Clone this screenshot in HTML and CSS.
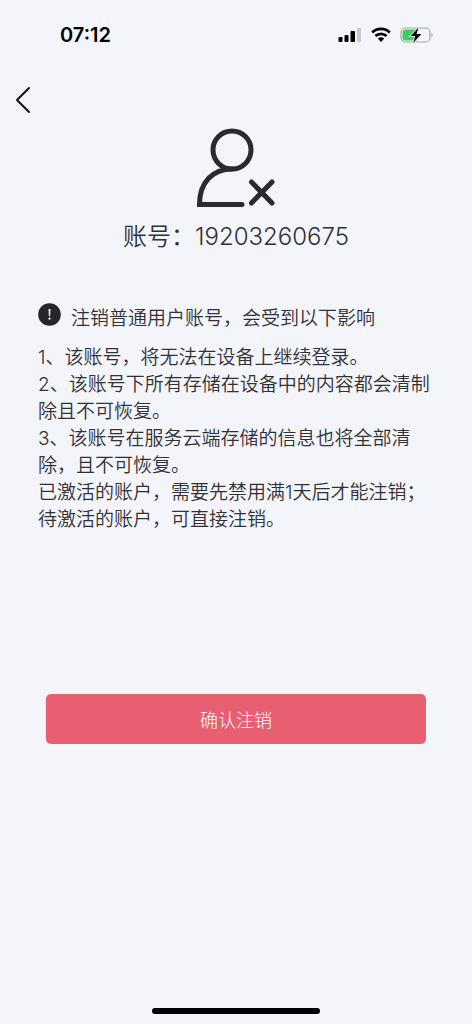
FILE: index.html
```html
<!DOCTYPE html>
<html lang="zh-CN">
<head>
<meta charset="utf-8">
<meta name="viewport" content="width=device-width, initial-scale=1">
<title>注销账号</title>
<link rel="stylesheet" href="styles.css">
</head>
<body>
<div class="screen">
  <header class="status">
    <time class="clock">07:12</time>
    <div class="indicators">
      <svg width="24" height="16" viewBox="0 0 24 16" aria-hidden="true">
        <rect x="0.5" y="10" width="4" height="5" rx="1"/>
        <rect x="6.5" y="8" width="4" height="7" rx="1"/>
        <rect x="12.5" y="4" width="4.5" height="11" rx="1"/>
        <rect x="19" y="1" width="4" height="14" rx="1" fill="#c9cace"/>
      </svg>
      <svg width="20" height="16" viewBox="0 0 20 16" aria-hidden="true">
        <path d="M1.2 5.4a12.8 12.8 0 0 1 17.6 0M4.4 9a8.2 8.2 0 0 1 11.2 0" fill="none" stroke="#000" stroke-width="2.7"/>
        <path d="M6.8 11.6a4.8 4.8 0 0 1 6.4 0L10 15z"/>
      </svg>
      <svg width="34" height="18" viewBox="0 0 34 18" aria-hidden="true">
        <rect x="1" y="2" width="29" height="14" rx="4.5" fill="none" stroke="#a3a5a9" stroke-width="1.2"/>
        <path d="M5.5 3.5H17v11H5.5a3 3 0 0 1-3-3v-5a3 3 0 0 1 3-3z" fill="#3dcb62"/>
        <path d="M31.5 6.5q2.2 2.5 0 5z" fill="#a3a5a9"/>
        <path d="M18.5 1.5 10.5 10h4.7l-2 7 8.2-9h-4.9z" stroke="#f4f5fa" stroke-width="1.6" paint-order="stroke"/>
      </svg>
    </div>
  </header>
  <nav class="nav">
    <button class="back" type="button" aria-label="返回">
      <svg width="16" height="28" viewBox="0 0 16 28" aria-hidden="true"><path d="M14 2 2 14l12 12" fill="none" stroke="#111217" stroke-width="2" stroke-linecap="round" stroke-linejoin="round"/></svg>
    </button>
  </nav>
  <main class="content">
    <section class="account">
      <svg width="80" height="80" viewBox="0 0 80 80" aria-hidden="true" fill="none" stroke="#2a2b2f" stroke-width="5">
        <circle cx="36" cy="22" r="19"/>
        <path d="M36 41C17 41 3.5 54 3.5 76.5H46" stroke-linecap="round" stroke-linejoin="miter"/>
        <path d="M55.5 54 76 75M76 54 55.5 75" stroke-linecap="round"/>
      </svg>
      <p class="number">账号：19203260675</p>
    </section>
    <section class="notice">
      <h1 class="title">
        <svg width="23" height="23" viewBox="0 0 23 23" aria-hidden="true"><circle cx="11.5" cy="11.5" r="11.3" fill="#25262b"/><path d="M10.5 6h2l-.4 7.3h-1.2z" fill="#f4f5fa"/><circle cx="11.5" cy="15.7" r="1.1" fill="#f4f5fa"/></svg>
        <span class="heading">注销普通用户账号，会受到以下影响</span>
      </h1>
      <p>1、该账号，将无法在设备上继续登录。</p>
      <p>2、该账号下所有存储在设备中的内容都会清制除且不可恢复。</p>
      <p>3、该账号在服务云端存储的信息也将全部清除，且不可恢复。</p>
      <p>已激活的账户，需要先禁用满1天后才能注销；</p>
      <p>待激活的账户，可直接注销。</p>
    </section>
    <button class="confirm" type="button">确认注销</button>
  </main>
  <footer class="home"><div class="bar"></div></footer>
</div>
</body>
</html>
```
FILE: styles.css
```css
* {
  box-sizing: border-box;
}

body {
  margin: 0;
  background: #f4f5fa;
  color: #303136;
  font-family: Inter, "Noto Sans CJK SC", sans-serif;
  font-weight: 350;
}

p,
h1 {
  margin: 0;
}

svg {
  display: block;
  flex: none;
}

.screen {
  display: flex;
  flex-direction: column;
  min-height: 100vh;
}

.status {
  display: flex;
  align-items: center;
  justify-content: space-between;
  padding: 23px 38px 0 60px;
}

.clock {
  color: #000;
  font-size: 20px;
  font-weight: 600;
  line-height: 24px;
}

.indicators {
  display: flex;
  align-items: center;
  gap: 9px;
}

.nav {
  padding: 39px 15px 0;
}

.back {
  display: block;
  padding: 0;
  border: 0;
  background: none;
  cursor: pointer;
}

.content {
  display: flex;
  flex-direction: column;
  flex: 1;
}

.account {
  display: flex;
  flex-direction: column;
  align-items: center;
  gap: 13px;
  padding-top: 14px;
}

.number {
  font-size: 24px;
  line-height: 32px;
}

.notice {
  padding: 50px 37px 0 38px;
  font-size: 19px;
  line-height: 27px;
}

.title {
  display: flex;
  align-items: flex-start;
  gap: 10px;
  margin-bottom: 12px;
  font-size: 19px;
  font-weight: 350;
}

.heading {
  padding-top: 2px;
}

.confirm {
  height: 50px;
  margin: 161px 46px 0;
  padding: 0;
  border: 0;
  border-radius: 5px;
  background: #e85f72;
  color: #fff;
  font-family: inherit;
  font-size: 18px;
  font-weight: 300;
  cursor: pointer;
}

.home {
  display: flex;
  justify-content: center;
  padding: 10px 0;
}

.bar {
  width: 168px;
  height: 6px;
  border-radius: 3px;
  background: #000;
}
```
